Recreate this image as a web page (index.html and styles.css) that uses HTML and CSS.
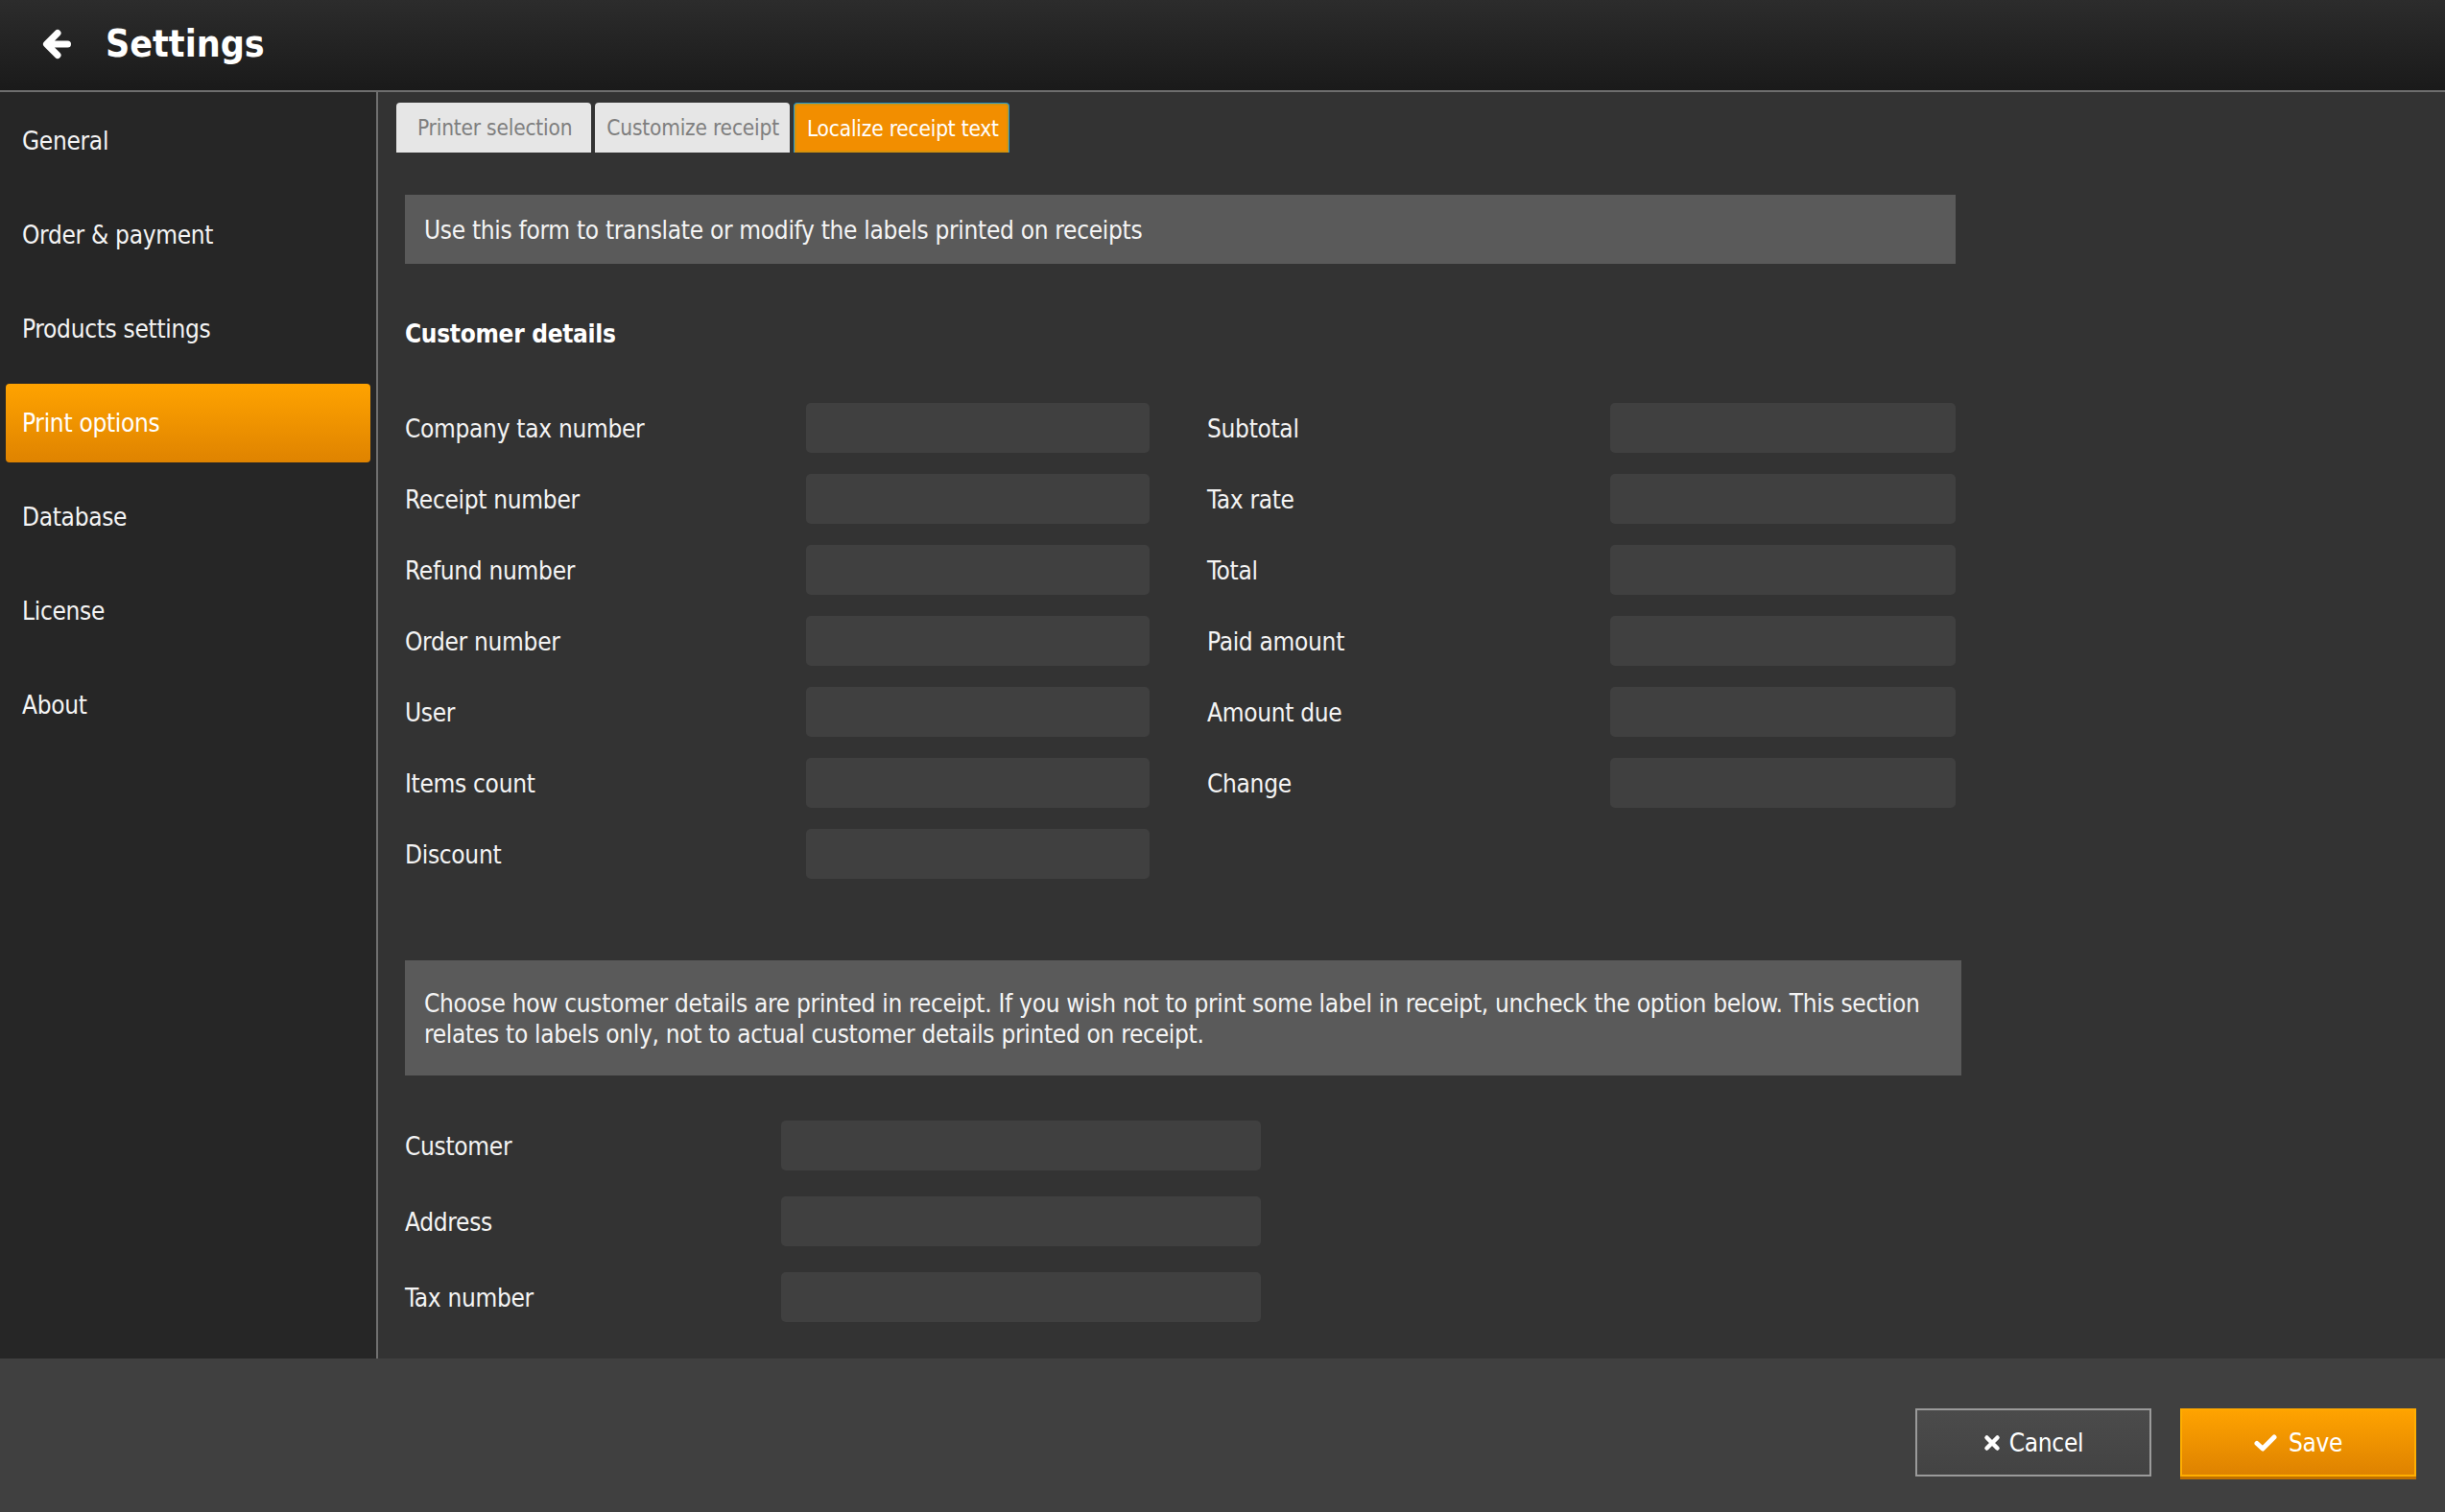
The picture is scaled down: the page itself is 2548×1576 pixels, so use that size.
FILE: index.html
```html
<!DOCTYPE html>
<html lang="en">
<head>
<meta charset="utf-8">
<title>Settings</title>
<link rel="stylesheet" href="styles.css">
</head>
<body>
<div class="app">
  <header class="topbar">
    <svg class="back-icon" viewBox="0 0 30 34" width="30" height="34" aria-hidden="true">
      <path d="M26.5 17H5M16 5.5L4.5 17L16 28.5" fill="none" stroke="#ffffff" stroke-width="7" stroke-linecap="round" stroke-linejoin="round"/>
    </svg>
    <h1 class="title">Settings</h1>
  </header>

  <div class="body">
    <nav class="sidebar">
      <div class="nav-item">General</div>
      <div class="nav-item">Order &amp; payment</div>
      <div class="nav-item">Products settings</div>
      <div class="nav-item nav-item-active">Print options</div>
      <div class="nav-item">Database</div>
      <div class="nav-item">License</div>
      <div class="nav-item">About</div>
    </nav>

    <main class="main">
      <div class="tabs">
        <div class="tab tab-first">Printer selection</div>
        <div class="tab">Customize receipt</div>
        <div class="tab tab-active">Localize receipt text</div>
      </div>

      <section class="content">
        <div class="info info-single">Use this form to translate or modify the labels printed on receipts</div>

        <h2 class="section-title">Customer details</h2>

        <div class="form-grid">
          <div class="form-col form-col-left">
            <div class="row"><span class="label">Company tax number</span><span class="input"></span></div>
            <div class="row"><span class="label">Receipt number</span><span class="input"></span></div>
            <div class="row"><span class="label">Refund number</span><span class="input"></span></div>
            <div class="row"><span class="label">Order number</span><span class="input"></span></div>
            <div class="row"><span class="label">User</span><span class="input"></span></div>
            <div class="row"><span class="label">Items count</span><span class="input"></span></div>
            <div class="row"><span class="label">Discount</span><span class="input"></span></div>
          </div>
          <div class="form-col form-col-right">
            <div class="row"><span class="label">Subtotal</span><span class="input"></span></div>
            <div class="row"><span class="label">Tax rate</span><span class="input"></span></div>
            <div class="row"><span class="label">Total</span><span class="input"></span></div>
            <div class="row"><span class="label">Paid amount</span><span class="input"></span></div>
            <div class="row"><span class="label">Amount due</span><span class="input"></span></div>
            <div class="row"><span class="label">Change</span><span class="input"></span></div>
          </div>
        </div>

        <div class="info info-multi">Choose how customer details are printed in receipt. If you wish not to print some label in receipt, uncheck the option below. This section relates to labels only, not to actual customer details printed on receipt.</div>

        <div class="form-single">
          <div class="row row-wide"><span class="label">Customer</span><span class="input"></span></div>
          <div class="row row-wide"><span class="label">Address</span><span class="input"></span></div>
          <div class="row row-wide"><span class="label">Tax number</span><span class="input"></span></div>
        </div>
      </section>
    </main>
  </div>

  <footer class="footer">
    <button class="btn btn-cancel" type="button">
      <svg class="btn-icon" viewBox="0 0 18 18" width="18" height="18" aria-hidden="true">
        <path d="M3.5 3.5L14.5 14.5M14.5 3.5L3.5 14.5" fill="none" stroke="#ffffff" stroke-width="4.5" stroke-linecap="round"/>
      </svg>
      <span>Cancel</span>
    </button>
    <button class="btn btn-save" type="button">
      <svg class="btn-icon" viewBox="0 0 24 18" width="24" height="18" aria-hidden="true">
        <path d="M3 9.5L9 15L21 3" fill="none" stroke="#ffffff" stroke-width="5" stroke-linecap="round" stroke-linejoin="round"/>
      </svg>
      <span>Save</span>
    </button>
  </footer>
</div>
</body>
</html>
```

FILE: styles.css
```css
* {
  box-sizing: border-box;
}

html, body {
  margin: 0;
  padding: 0;
}

body {
  width: 2548px;
  height: 1576px;
  overflow: hidden;
  background: #333333;
  font-family: "DejaVu Sans Condensed", "DejaVu Sans", sans-serif;
  font-stretch: condensed;
  font-size: 26px;
  letter-spacing: -0.3px;
  color: #f2f2f2;
}

.app {
  display: flex;
  flex-direction: column;
  height: 1576px;
}

/* Header */
.topbar {
  height: 96px;
  flex: 0 0 96px;
  display: flex;
  align-items: center;
  padding-left: 44px;
  background: linear-gradient(#2c2c2c, #1a1a1a);
  border-bottom: 2px solid #6e6e6e;
}

.back-icon {
  display: block;
  margin-top: -2px;
}

.title {
  margin: -4px 0 0 36px;
  font-size: 39px;
  font-weight: bold;
  letter-spacing: 0;
  color: #ffffff;
  line-height: 1;
}

/* Body */
.body {
  flex: 1 1 auto;
  display: flex;
  min-height: 0;
}

.sidebar {
  width: 394px;
  flex: 0 0 394px;
  background: #262626;
  border-right: 2px solid #707070;
  padding: 10px 6px 0 6px;
  display: flex;
  flex-direction: column;
  gap: 16px;
}

.nav-item {
  height: 82px;
  display: flex;
  align-items: center;
  padding-left: 17px;
  color: #f4f4f4;
  border-radius: 4px;
}

.nav-item-active {
  background: linear-gradient(#ffa300, #df8300);
  color: #ffffff;
}

.main {
  flex: 1 1 auto;
  background: #333333;
  padding: 11px 0 0 19px;
}

/* Tabs */
.tabs {
  display: flex;
  gap: 4px;
  height: 52px;
}

.tab {
  height: 52px;
  display: flex;
  align-items: center;
  padding: 0 11px 0 12px;
  background: #e6e6e6;
  color: #7f7f7f;
  font-size: 22.5px;
  letter-spacing: -0.2px;
  border-radius: 4px 4px 0 0;
}

.tab-first {
  padding: 0 20px 0 22px;
}

.tab-active {
  background: #f28e00;
  color: #ffffff;
  border: 1px solid #1e9ad4;
  border-bottom: none;
  box-shadow: inset 0 0 0 2px #d7920c;
  padding: 0 10px 0 13px;
}

/* Content */
.content {
  padding-left: 9px;
}

.info {
  background: #5a5a5a;
  color: #f4f4f4;
  padding: 0 20px;
}

.info-single {
  width: 1616px;
  height: 72px;
  margin-top: 44px;
  display: flex;
  align-items: center;
  padding-top: 1px;
}

.info-multi {
  width: 1622px;
  margin-top: 85px;
  padding: 29px 18px 27px 20px;
  line-height: 32px;
}

.section-title {
  margin: 58px 0 0 0;
  font-size: 26px;
  line-height: 30px;
  font-weight: bold;
  color: #ffffff;
}

.form-grid {
  margin-top: 57px;
  display: grid;
  grid-template-columns: 776px 780px;
  column-gap: 60px;
}

.form-col {
  display: flex;
  flex-direction: column;
  gap: 22px;
}

.row {
  display: grid;
  grid-template-columns: 418px 1fr;
  align-items: center;
  height: 52px;
}

.form-col-right .row {
  grid-template-columns: 420px 1fr;
}

.label {
  color: #f4f4f4;
  white-space: nowrap;
  padding-top: 2px;
}

.input {
  display: block;
  height: 52px;
  background: #404040;
  border-radius: 5px;
}

.form-single {
  margin-top: 47px;
  display: flex;
  flex-direction: column;
  gap: 27px;
  width: 892px;
}

.row-wide {
  grid-template-columns: 392px 500px;
}

/* Footer */
.footer {
  height: 160px;
  flex: 0 0 160px;
  background: #404040;
  display: flex;
  justify-content: flex-end;
  align-items: flex-start;
  gap: 30px;
  padding: 52px 30px 0 0;
}

.btn {
  width: 246px;
  height: 71px;
  display: flex;
  align-items: center;
  justify-content: center;
  gap: 9px;
  font-family: inherit;
  font-stretch: condensed;
  font-size: 26px;
  letter-spacing: -0.3px;
  color: #ffffff;
  cursor: pointer;
  padding: 0;
}

.btn-icon {
  display: block;
}

.btn-cancel {
  background: linear-gradient(#4b4b4b, #434343);
  border: 2px solid #9a9a9a;
}

.btn-save {
  background: linear-gradient(#ffa300, #de8200);
  border: 2px solid #ffae00;
  border-top-color: #ffa800;
  box-shadow: 0 3px 0 #c07000;
  gap: 12px;
}
```
